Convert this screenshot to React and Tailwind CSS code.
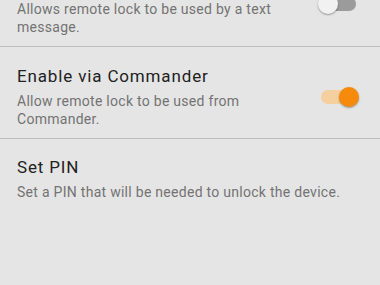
import React from "react";

function Toggle({ on, className = "" }) {
  return (
    <div className={`relative w-[41px] h-[20px] shrink-0 ${className}`}>
      <div
        className={`absolute left-[3px] right-[3px] top-[3px] h-[14px] rounded-full ${
          on ? "bg-[#f6cf9f]" : "bg-[#9b9b9b]"
        }`}
      />
      <div
        className={`absolute top-0 w-[20px] h-[20px] rounded-full shadow-[0_1px_2px_rgba(0,0,0,0.35)] ${
          on ? "right-0 bg-[#f68a0a]" : "left-0 bg-[#f1f1f1]"
        }`}
      />
    </div>
  );
}

function Row({ title, subtitle, toggle, pt, pb, toggleClass = "" }) {
  return (
    <div className={`flex items-center pl-[17px] pr-[21px] ${pt} ${pb}`}>
      <div className="flex-1 min-w-0">
        {title && (
          <div className="mb-[5px] text-[17px] leading-[22px] tracking-[0.85px] text-[#212121]">{title}</div>
        )}
        <div className="text-[14px] leading-[18px] tracking-[0.28px] text-[#737373]">{subtitle}</div>
      </div>
      {toggle !== undefined && (
        <Toggle on={toggle} className={`ml-[16px] ${toggleClass}`} />
      )}
    </div>
  );
}

export default function App() {
  return (
    <div
      className="w-[380px] h-[285px] overflow-hidden bg-[#e5e5e5]"
      style={{ fontFamily: "Roboto, 'Noto Sans', sans-serif" }}
    >
      <Row
        subtitle="Allows remote lock to be used by a text message."
        toggle={false}
        pt="pt-0"
        pb="pb-[10px]"
        toggleClass="self-start -mt-[6px]"
      />
      <div className="h-px bg-[#bdbdbd]" />
      <Row
        title="Enable via Commander"
        subtitle="Allow remote lock to be used from Commander."
        toggle={true}
        pt="pt-[18px]"
        pb="pb-[10px]"
      />
      <div className="h-px bg-[#bdbdbd]" />
      <Row
        title="Set PIN"
        subtitle="Set a PIN that will be needed to unlock the device."
        pt="pt-[17px]"
        pb="pb-[16px]"
      />
    </div>
  );
}
